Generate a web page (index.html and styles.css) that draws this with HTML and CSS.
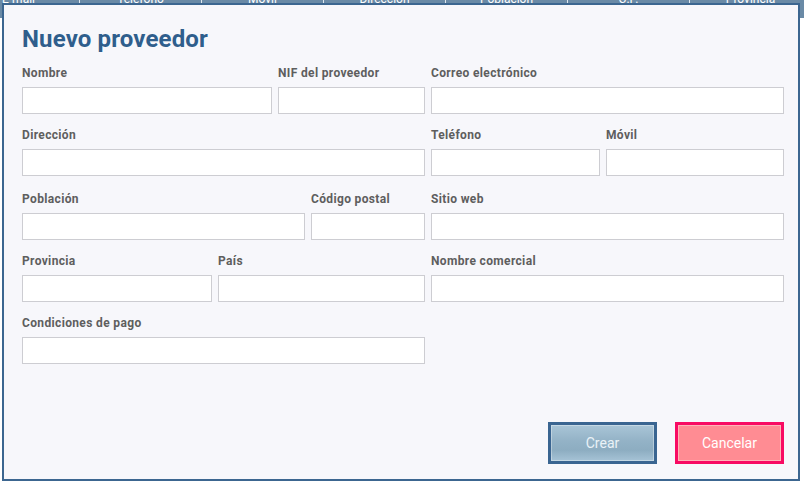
FILE: index.html
```html
<!DOCTYPE html>
<html lang="es">
<head>
<meta charset="utf-8">
<title>Nuevo proveedor</title>
<link rel="stylesheet" href="styles.css">
</head>
<body>
<div class="table">
  <div class="thead">
    <div class="th">E-mail</div>
    <div class="th">Teléfono</div>
    <div class="th">Móvil</div>
    <div class="th">Dirección</div>
    <div class="th">Población</div>
    <div class="th">C.P.</div>
    <div class="th">Provincia</div>
  </div>
</div>

<div class="modal">
  <h1 class="title">Nuevo proveedor</h1>
  <form class="form">
    <div class="row r1">
      <label class="field"><span class="lbl">Nombre</span><input class="inp" type="text"></label>
      <label class="field"><span class="lbl">NIF del proveedor</span><input class="inp" type="text"></label>
      <label class="field"><span class="lbl">Correo electrónico</span><input class="inp" type="text"></label>
    </div>
    <div class="row r2">
      <label class="field"><span class="lbl">Dirección</span><input class="inp" type="text"></label>
      <label class="field"><span class="lbl">Teléfono</span><input class="inp" type="text"></label>
      <label class="field"><span class="lbl">Móvil</span><input class="inp" type="text"></label>
    </div>
    <div class="row r3">
      <label class="field"><span class="lbl">Población</span><input class="inp" type="text"></label>
      <label class="field"><span class="lbl">Código postal</span><input class="inp" type="text"></label>
      <label class="field"><span class="lbl">Sitio web</span><input class="inp" type="text"></label>
    </div>
    <div class="row r4">
      <label class="field"><span class="lbl">Provincia</span><input class="inp" type="text"></label>
      <label class="field"><span class="lbl">País</span><input class="inp" type="text"></label>
      <label class="field"><span class="lbl">Nombre comercial</span><input class="inp" type="text"></label>
    </div>
    <div class="row r5">
      <label class="field"><span class="lbl">Condiciones de pago</span><input class="inp" type="text"></label>
    </div>
  </form>
  <div class="actions">
    <button class="btn btn-create" type="button">Crear</button>
    <button class="btn btn-cancel" type="button">Cancelar</button>
  </div>
</div>
</body>
</html>
```

FILE: styles.css
```css
* { box-sizing: border-box; }

html, body {
  margin: 0;
  padding: 0;
  width: 804px;
  height: 484px;
  overflow: hidden;
  background: #ffffff;
  font-family: Roboto, "Liberation Sans", Arial, sans-serif;
}

.table {
  width: 804px;
}

.thead {
  display: flex;
  height: 26px;
  margin-top: -8px;
  margin-left: -42px;
  background: #6a8aa6;
}

.th {
  flex: 0 0 122px;
  border-right: 1px solid #dfe7ee;
  color: #ffffff;
  font-size: 12px;
  line-height: 14px;
  text-align: center;
}

.modal {
  position: absolute;
  left: 2px;
  top: 3px;
  width: 798px;
  height: 478px;
  background: #f7f7fb;
  border: 2px solid #3c6690;
  padding: 0 14px 15px 18px;
  display: flex;
  flex-direction: column;
}

.title {
  margin: 20px 0 12px;
  font-size: 24px;
  line-height: 28px;
  font-weight: 700;
  letter-spacing: 0.15px;
  color: #2f5e8c;
}

.form {
  display: flex;
  flex-direction: column;
  gap: 13px;
}

.row {
  display: grid;
  column-gap: 6px;
}

.r1 { grid-template-columns: 250px 147px 353px; }
.r2 { grid-template-columns: 403px 169px 178px; }
.r3 { grid-template-columns: 283px 114px 353px; margin-top: 2px; }
.r4 { grid-template-columns: 190px 207px 353px; }
.r5 { grid-template-columns: 403px; }

.field {
  display: flex;
  flex-direction: column;
  gap: 6px;
}

.lbl {
  font-size: 12px;
  line-height: 16px;
  font-weight: 700;
  letter-spacing: 0.35px;
  color: #5e5e5e;
}

.inp {
  display: block;
  width: 100%;
  height: 27px;
  margin: 0;
  border: 1px solid #cdcdd2;
  border-radius: 0;
  background: #ffffff;
  font-family: inherit;
  font-size: 13px;
  padding: 0 6px;
  outline: none;
}

.actions {
  margin-top: auto;
  display: flex;
  justify-content: flex-end;
  gap: 18px;
}

.btn {
  width: 109px;
  height: 42px;
  margin: 0;
  font-family: Roboto, "Liberation Sans", Arial, sans-serif;
  font-size: 14px;
  font-weight: 400;
  cursor: pointer;
  border-radius: 0;
  box-shadow: inset 0 0 0 1px rgba(255, 255, 255, 0.35);
}

.btn-create {
  border: 3px solid #3a6591;
  background: linear-gradient(#a9c5d7 0%, #93b2c6 45%, #8dadc1 70%, #a6c3d6 100%);
  color: #eaf2f7;
}

.btn-cancel {
  border: 3px solid #f80b63;
  background: #ff8c93;
  color: #ffffff;
}
```
